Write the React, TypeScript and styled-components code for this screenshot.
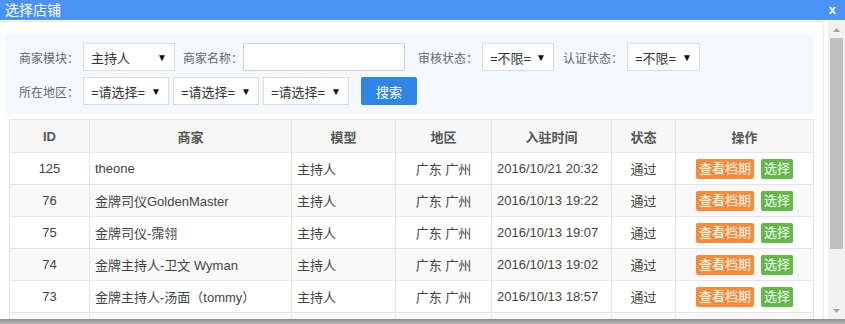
import React from "react";
import styled, { createGlobalStyle } from "styled-components";

const GlobalStyle = createGlobalStyle`
  html, body {
    margin: 0;
    padding: 0;
    width: 845px;
    height: 324px;
    overflow: hidden;
    background: #fff;
  }
  body {
    font-family: "Liberation Sans", "Noto Sans CJK SC", sans-serif;
    font-size: 13px;
    color: #444;
  }
`;

const Dialog = styled.div`
  width: 845px;
  height: 324px;
  display: flex;
  flex-direction: column;
  background: #fff;
`;

const TitleBar = styled.div`
  height: 20px;
  flex: none;
  display: flex;
  align-items: center;
  justify-content: space-between;
  padding: 0 9px 0 5px;
  background: #4b93f7;
  color: #fff;
`;

const Title = styled.span`
  font-size: 14px;
  line-height: 20px;
`;

const Close = styled.span`
  font-size: 13px;
  font-weight: bold;
  line-height: 20px;
`;

const Main = styled.div`
  flex: 1;
  min-height: 0;
  display: flex;
  gap: 4px;
`;

const Frame = styled.div`
  flex: 1;
  margin-top: 1px;
  border-top: 1px solid #efe2ef;
  border-right: 1px solid #ececec;
  padding: 13px 10px 0 5px;
  overflow: hidden;
`;

const Panel = styled.div`
  background: #f5f9fd;
  padding: 8px 14px 9px;
  display: flex;
  flex-direction: column;
  gap: 6px;
`;

const FilterRow = styled.div`
  display: flex;
  align-items: center;
`;

const Label = styled.span<{ $ml?: number }>`
  width: 60px;
  margin-left: ${(p) => p.$ml ?? 0}px;
  font-size: 12px;
  color: #666;
  white-space: nowrap;
`;

const Select = styled.div<{ $w: number; $ml?: number }>`
  box-sizing: border-box;
  width: ${(p) => p.$w}px;
  height: 28px;
  margin-left: ${(p) => p.$ml ?? 4}px;
  padding: 0 7px 0 7px;
  display: flex;
  align-items: center;
  justify-content: space-between;
  background: #fff;
  border: 1px solid #dcdcdc;
  font-size: 13px;
  color: #333;
`;

const Caret = styled.span`
  font-size: 10px;
  color: #111;
`;

const TextInput = styled.input`
  box-sizing: border-box;
  width: 162px;
  height: 28px;
  margin: 0;
  border: 1px solid #cfcfcf;
  border-radius: 2px;
  background: #fff;
`;

const SearchButton = styled.button`
  width: 56px;
  height: 28px;
  margin-left: 12px;
  border: none;
  border-radius: 2px;
  background: #2f86e6;
  color: #fff;
  font-family: inherit;
  font-size: 13px;
  padding: 0;
`;

const Table = styled.table`
  width: 804px;
  margin: 5px 0 0 4px;
  border-collapse: collapse;
  table-layout: fixed;
  border: 1px solid #e6e6e6;
`;

const Th = styled.th`
  height: 32px;
  padding: 0;
  border: 1px solid #e6e6e6;
  background: #f7f7f7;
  color: #555;
  font-size: 13px;
  font-weight: bold;
  text-align: center;
`;

const Tr = styled.tr`
  &:nth-child(even) td {
    background: #f9f9f9;
  }
`;

const Td = styled.td<{ $align?: string }>`
  height: 31px;
  padding: 0 5px;
  border: 1px solid #e6e6e6;
  background: #fff;
  color: #444;
  text-align: ${(p) => p.$align ?? "left"};
  white-space: nowrap;
`;

const Actions = styled.div`
  display: flex;
  justify-content: center;
  gap: 7px;
`;

const Tag = styled.span<{ $color: string }>`
  display: inline-block;
  height: 20px;
  line-height: 20px;
  padding: 0 3px;
  border-radius: 2px;
  background: ${(p) => p.$color};
  color: #fff;
  font-size: 13px;
`;

const Scrollbar = styled.div`
  width: 17px;
  flex: none;
  margin-top: 1px;
  display: flex;
  flex-direction: column;
  background: #f1f1f1;
`;

const ArrowBox = styled.div`
  height: 17px;
  flex: none;
  display: flex;
  align-items: center;
  justify-content: center;
`;

const Thumb = styled.div`
  height: 211px;
  margin: 0 2px;
  background: #c1c1c1;
`;

const Gap = styled.div`
  flex: 1;
`;

const BottomBar = styled.div`
  height: 5px;
  flex: none;
  background: linear-gradient(#8e8e8e, #b8b8b8);
`;

const Arrow = ({ up }: { up?: boolean }) => (
  <svg width="7" height="4" viewBox="0 0 7 4">
    <path d={up ? "M0 4 L3.5 0 L7 4 Z" : "M0 0 L3.5 4 L7 0 Z"} fill="#a3a3a3" />
  </svg>
);

const cols = [80, 202, 104, 96, 120, 64, 138];

const rows = [
  { id: 125, name: "theone", time: "2016/10/21 20:32" },
  { id: 76, name: "金牌司仪GoldenMaster", time: "2016/10/13 19:22" },
  { id: 75, name: "金牌司仪-霈翎", time: "2016/10/13 19:07" },
  { id: 74, name: "金牌主持人-卫文 Wyman", time: "2016/10/13 19:02" },
  { id: 73, name: "金牌主持人-汤面（tommy）", time: "2016/10/13 18:57" },
];

const App = () => {
  return (
    <Dialog>
      <GlobalStyle />
      <TitleBar>
        <Title>选择店铺</Title>
        <Close>x</Close>
      </TitleBar>
      <Main>
        <Frame>
          <Panel>
            <FilterRow>
              <Label>商家模块：</Label>
              <Select $w={92}>
                主持人<Caret>▼</Caret>
              </Select>
              <Label $ml={8}>商家名称：</Label>
              <TextInput />
              <Label $ml={13}>审核状态：</Label>
              <Select $w={72}>
                =不限=<Caret>▼</Caret>
              </Select>
              <Label $ml={9}>认证状态：</Label>
              <Select $w={73}>
                =不限=<Caret>▼</Caret>
              </Select>
            </FilterRow>
            <FilterRow>
              <Label>所在地区：</Label>
              <Select $w={86}>
                =请选择=<Caret>▼</Caret>
              </Select>
              <Select $w={86}>
                =请选择=<Caret>▼</Caret>
              </Select>
              <Select $w={86}>
                =请选择=<Caret>▼</Caret>
              </Select>
              <SearchButton>搜索</SearchButton>
            </FilterRow>
          </Panel>
          <Table>
            <colgroup>
              {cols.map((w, i) => (
                <col key={i} style={{ width: w }} />
              ))}
            </colgroup>
            <thead>
              <tr>
                <Th>ID</Th>
                <Th>商家</Th>
                <Th>模型</Th>
                <Th>地区</Th>
                <Th>入驻时间</Th>
                <Th>状态</Th>
                <Th>操作</Th>
              </tr>
            </thead>
            <tbody>
              {rows.map((r) => (
                <Tr key={r.id}>
                  <Td $align="center">{r.id}</Td>
                  <Td>{r.name}</Td>
                  <Td>主持人</Td>
                  <Td $align="center">广东 广州</Td>
                  <Td>{r.time}</Td>
                  <Td $align="center">通过</Td>
                  <Td $align="center">
                    <Actions>
                      <Tag $color="#fa8a37">查看档期</Tag>
                      <Tag $color="#61b946">选择</Tag>
                    </Actions>
                  </Td>
                </Tr>
              ))}
              <Tr>
                {cols.map((_, i) => (
                  <Td key={i} />
                ))}
              </Tr>
            </tbody>
          </Table>
        </Frame>
        <Scrollbar>
          <ArrowBox>
            <Arrow up />
          </ArrowBox>
          <Thumb />
          <Gap />
          <ArrowBox>
            <Arrow />
          </ArrowBox>
        </Scrollbar>
      </Main>
      <BottomBar />
    </Dialog>
  );
};

export default App;
